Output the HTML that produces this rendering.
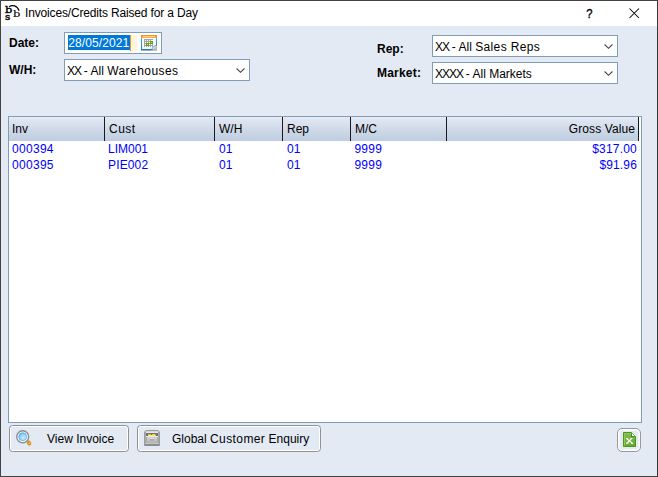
<!DOCTYPE html>
<html>
<head>
<meta charset="utf-8">
<title>Invoices/Credits Raised for a Day</title>
<style>
html,body{margin:0;padding:0;}
body{width:658px;height:477px;overflow:hidden;background:#E3EAF4;font-family:"Liberation Sans",Arial,sans-serif;font-size:12px;color:#000;position:relative;}
.abs{position:absolute;}
#win{position:absolute;left:0;top:0;width:656px;height:475px;border:1px solid #444;border-right-color:#383838;background:#E3EAF4;}
#title{position:absolute;left:1px;top:1px;width:656px;height:25px;background:#fff;}
#title .txt{position:absolute;left:24px;top:5px;font-size:12px;line-height:15px;white-space:nowrap;color:#000;letter-spacing:-0.16px;}
.lbl{position:absolute;font-weight:bold;font-size:12px;line-height:14px;white-space:nowrap;}
.field{position:absolute;box-sizing:border-box;border:1px solid #7F9DB9;background:#fff;height:22px;}
.field .t{position:absolute;left:2px;top:4px;line-height:14px;font-size:12px;white-space:nowrap;}
.chev{position:absolute;right:4px;top:8.4px;width:9px;height:5px;overflow:visible;}
#grid{position:absolute;left:8px;top:116px;width:634px;height:307px;box-sizing:border-box;border:1px solid #7F9DB9;background:#fff;}
#hdr{position:absolute;left:0;top:0;width:630px;height:24px;background:linear-gradient(#EAEFF8 0px,#E2E8F2 1.5px,#D0DAE9 12px,#BECDE0 24px);}
.hc{position:absolute;top:0;height:24px;box-sizing:border-box;border-right:1px solid #181a1e;}
.hc span{position:absolute;top:5px;line-height:14px;white-space:nowrap;}
.row{position:absolute;left:0;width:632px;height:16px;color:#0000FF;}
.row span{position:absolute;top:1px;line-height:14px;white-space:nowrap;}
.btn{position:absolute;box-sizing:border-box;border:1px solid #929292;border-radius:3.5px;background:#E3EAF4;box-shadow:inset 0 0 0 1px #fff;}
.btn .t{position:absolute;top:6px;line-height:14px;white-space:nowrap;}
</style>
</head>
<body>
<div id="win"></div>
<div id="title">
  <svg class="abs" style="left:3px;top:3px" width="18" height="18" viewBox="0 0 18 18">
    <text transform="translate(1.1,9) scale(1.12,0.96)" font-family="DejaVu Serif,Liberation Serif,serif" font-size="10.2" fill="#000" stroke="#000" stroke-width="0.4">b</text>
    <text transform="translate(1.1,15.7) scale(1.1,1)" font-family="DejaVu Serif,Liberation Serif,serif" font-size="9.4" fill="#000" stroke="#000" stroke-width="0.4">s</text>
    <text transform="translate(9,12.9) scale(1.12,0.98)" font-family="DejaVu Serif,Liberation Serif,serif" font-size="10.2" fill="#000" stroke="#000" stroke-width="0.12">b</text>
    <path d="M5 2.8 C8.3 0.5 13.2 1.4 15.1 6.8" fill="none" stroke="#000" stroke-width="1.2"/>
  </svg>
  <div class="txt">Invoices/Credits Raised for a Day</div>
  <svg class="abs" style="left:582px;top:4px" width="14" height="18" viewBox="0 0 14 18"><text transform="translate(3.3,13.0) scale(0.9,1.06)" font-family="Liberation Sans,Arial,sans-serif" font-size="12.5" fill="#000" stroke="#000" stroke-width="0.35">?</text></svg>
  <svg class="abs" style="left:627px;top:6px" width="12" height="12" viewBox="0 0 12 12"><path d="M1.5 1.5 L11 11 M11 1.5 L1.5 11" stroke="#000" stroke-width="1.05" fill="none"/></svg>
</div>

<div class="lbl" style="left:9px;top:36px;">Date:</div>
<div class="lbl" style="left:9px;top:63px;">W/H:</div>
<div class="lbl" style="left:377px;top:42px;">Rep:</div>
<div class="lbl" style="left:377px;top:66px;letter-spacing:0.2px">Market:</div>

<div class="field" style="left:64px;top:32px;width:98px;">
  <div class="abs" style="left:2px;top:2px;width:70px;height:16px;background:#FFF4DC;"></div>
  <div class="abs" style="left:3px;top:2px;width:62px;height:15px;background:#0078D7;"></div>
  <div class="abs" style="left:65px;top:2px;width:1px;height:16px;background:#F7941D;"></div>
  <div class="t" style="left:3.3px;top:3px;color:#fff;letter-spacing:0.08px;">28/05/2021</div>
  <svg class="abs" style="left:76px;top:2px" width="16" height="16" viewBox="0 0 16 16" shape-rendering="crispEdges">
    <defs><linearGradient id="calb" x1="0" y1="0" x2="0" y2="1"><stop offset="0" stop-color="#5AA9E6"/><stop offset="1" stop-color="#1B77B8"/></linearGradient></defs>
    <rect x="0" y="15" width="16" height="1" fill="#A9A9A9"/>
    <rect x="0" y="2" width="16" height="13" fill="url(#calb)"/>
    <rect x="1" y="3" width="14" height="11" fill="#F1FAFF"/>
    <rect x="0" y="0" width="16" height="3" fill="#F7931E"/>
    <rect x="2" y="1" width="12" height="1" fill="#FFD08A"/>
    <rect x="1" y="2" width="14" height="1" fill="#FBB04D"/>
    <rect x="3" y="4" width="10" height="8" fill="#A4A4A4"/>
    <g fill="#F4F4FB"><rect x="4" y="5" width="1" height="1"/><rect x="6" y="5" width="1" height="1"/><rect x="8" y="5" width="1" height="1"/><rect x="10" y="5" width="2" height="1"/>
    <rect x="4" y="7" width="1" height="1"/><rect x="6" y="7" width="1" height="1"/><rect x="8" y="7" width="1" height="1"/><rect x="12" y="7" width="1" height="1"/>
    <rect x="4" y="9" width="1" height="1"/><rect x="8" y="9" width="1" height="1"/><rect x="10" y="9" width="1" height="1"/><rect x="12" y="9" width="1" height="1"/>
    <rect x="4" y="11" width="1" height="1"/><rect x="6" y="11" width="1" height="1"/><rect x="8" y="11" width="1" height="1"/><rect x="10" y="11" width="1" height="1"/><rect x="12" y="4" width="1" height="8"/></g>
    <rect x="5" y="8" width="3" height="3" fill="#5FA60F"/><rect x="6" y="9" width="1" height="1" fill="#A5DB3C"/>
    <rect x="9" y="6" width="3" height="3" fill="#5FA60F"/><rect x="10" y="7" width="1" height="1" fill="#A5DB3C"/>
    <path d="M10 16 L16 10 L16 16 Z" fill="#B9BBBE" shape-rendering="auto"/>
    <path d="M11 14 L15 10 L15 11 Q13 11.5 12.5 14 Z" fill="#E8F3FB" shape-rendering="auto"/>
    <path d="M10.5 14.5 Q12 11 15.5 10" fill="none" stroke="#5C9BCB" stroke-width="0.9" shape-rendering="auto"/>
  </svg>
</div>

<div class="field" style="left:64px;top:59px;width:186px;"><div class="t"><span style="letter-spacing:-1px;margin-right:-0.5px">XX</span> - All <span style="letter-spacing:0.44px">Warehouses</span></div>
  <svg class="chev" viewBox="0 0 9 5"><path d="M0.6 0.5 L4.5 4.3 L8.4 0.5" fill="none" stroke="#444" stroke-width="1.1"/></svg></div>
<div class="field" style="left:432px;top:35px;width:186px;"><div class="t"><span style="letter-spacing:-1px;margin-right:-0.5px">XX</span> - All <span style="letter-spacing:0.36px">Sales Reps</span></div>
  <svg class="chev" viewBox="0 0 9 5"><path d="M0.6 0.5 L4.5 4.3 L8.4 0.5" fill="none" stroke="#444" stroke-width="1.1"/></svg></div>
<div class="field" style="left:432px;top:62px;width:186px;"><div class="t"><span style="letter-spacing:-1px;margin-right:-0.5px">XXXX</span> - All Markets</div>
  <svg class="chev" viewBox="0 0 9 5"><path d="M0.6 0.5 L4.5 4.3 L8.4 0.5" fill="none" stroke="#444" stroke-width="1.1"/></svg></div>

<div id="grid">
  <div id="hdr"></div>
  <div class="hc" style="left:0;width:96px;"><span style="left:3px">Inv</span></div>
  <div class="hc" style="left:96px;width:110px;"><span style="left:4px;letter-spacing:0.5px">Cust</span></div>
  <div class="hc" style="left:206px;width:68px;"><span style="left:4px">W/H</span></div>
  <div class="hc" style="left:274px;width:68px;"><span style="left:4px">Rep</span></div>
  <div class="hc" style="left:342px;width:96px;"><span style="left:4px">M/C</span></div>
  <div class="hc" style="left:438px;width:192px;"><span style="right:3px;letter-spacing:0.1px">Gross Value</span></div>
  <div class="row" style="top:24px;"><span style="left:3px;letter-spacing:0.3px">000394</span><span style="left:99px">LIM001</span><span style="left:210px">01</span><span style="left:278px">01</span><span style="left:345.4px;letter-spacing:0.25px">9999</span><span style="right:4px;letter-spacing:0.2px">$317.00</span></div>
  <div class="row" style="top:40px;"><span style="left:3px;letter-spacing:0.3px">000395</span><span style="left:99px;letter-spacing:0.15px">PIE002</span><span style="left:210px">01</span><span style="left:278px">01</span><span style="left:345.4px;letter-spacing:0.25px">9999</span><span style="right:4px;letter-spacing:0.15px">$91.96</span></div>
</div>

<div class="btn" style="left:9px;top:425px;width:120px;height:27px;">
  <svg class="abs" style="left:6px;top:4px" width="16" height="16" viewBox="0 0 16 16">
    <defs><radialGradient id="lens" cx="0.6" cy="0.65" r="0.7"><stop offset="0" stop-color="#C4ECFB"/><stop offset="0.6" stop-color="#9AD5F7"/><stop offset="1" stop-color="#4CA6EE"/></radialGradient></defs>
    <path d="M10.2 11.6 L12.2 9.6 L15 12 Q15.8 13.8 14.7 14.9 Q13.4 15.9 11.8 14.9 Z" fill="#D8931C"/>
    <path d="M12.6 12.4 L13.9 12.3 L14.2 13.6 L13 14.2 Z" fill="#FFC84A"/>
    <path d="M10.2 11 L11.6 9.6 L12.8 10.6 L11.2 12.2 Z" fill="#B8BEC6"/>
    <circle cx="6.7" cy="6.7" r="6" fill="#fff" stroke="#8C8C8C" stroke-width="1.4"/>
    <circle cx="6.7" cy="6.7" r="4.0" fill="url(#lens)" stroke="#4FA7EC" stroke-width="0.7"/>
  </svg>
  <div class="t" style="left:37px;">View Invoice</div>
</div>
<div class="btn" style="left:137px;top:425px;width:184px;height:27px;">
  <svg class="abs" style="left:6px;top:4px" width="16" height="16" viewBox="0 0 16 16">
    <defs><linearGradient id="cabg" x1="0" y1="0" x2="0" y2="1"><stop offset="0" stop-color="#D2D2D2"/><stop offset="1" stop-color="#B2B2B2"/></linearGradient></defs>
    <path d="M2 0 H14 L16 2 V15 Q16 16 15 16 H1 Q0 16 0 15 V2 Z" fill="#9B9B9B"/>
    <path d="M2.2 1 H13.8 L15 2.2 V3 H1 V2.2 Z" fill="#DADADA"/>
    <rect x="1" y="2" width="14" height="12" fill="#ABABAB"/>
    <rect x="2" y="2" width="12" height="1" fill="#E6E6E6"/>
    <rect x="2" y="3" width="12" height="3.2" fill="#6A7182"/>
    <path d="M4 6 V4.2 H6.6 L7.2 5 H7.8 L8.4 4 H11 L11.8 5 V6 Z" fill="#F6D93C"/>
    <path d="M4.4 6 V5 H7 L7.4 5.4 H11.4 V6 Z" fill="#FFEB6E"/>
    <rect x="2" y="6.1" width="12" height="0.9" fill="#F2F2F2"/>
    <rect x="3" y="7" width="10" height="6" fill="url(#cabg)"/>
    <rect x="6" y="8.2" width="4" height="2.6" rx="0.6" fill="#A9A9A9"/>
    <rect x="6" y="8" width="4" height="0.9" rx="0.4" fill="#E4E4E4"/>
    <rect x="1" y="13" width="14" height="1" fill="#C6C6C6"/>
    <rect x="0.5" y="14" width="15" height="2" rx="0.8" fill="#8C8C8C"/>
  </svg>
  <div class="t" style="left:34px;">Global <span style="letter-spacing:0.4px">Customer</span> Enquiry</div>
</div>
<div class="btn" style="left:617px;top:428px;width:24px;height:24px;border-radius:5px;border-color:#989898;box-shadow:inset 0 0 0 1px #fff, inset 0 0 0 2px rgba(255,255,255,0.55);">
  <svg class="abs" style="left:5px;top:3px" width="13" height="15" viewBox="0 0 13 15">
    <defs><linearGradient id="xlg" x1="0" y1="0" x2="0" y2="1"><stop offset="0" stop-color="#84BE4E"/><stop offset="1" stop-color="#62AA2C"/></linearGradient></defs>
    <path d="M0.5 0.5 H8.5 L12.5 4.5 V14.5 H0.5 Z" fill="url(#xlg)" stroke="#4C961F"/>
    <path d="M1.5 13.5 V1.5 H8" fill="none" stroke="#93CB62" stroke-width="0.9"/>
    <path d="M8 1 V5 H12 Z" fill="#3F8A18"/>
    <path d="M9 1.2 L11.8 4 H9 Z" fill="#fff"/>
    <path d="M3.6 6.5 L9.4 11.3 M8.6 6.5 L3.8 11.3" stroke="#fff" stroke-width="1.15" fill="none"/>
    <path d="M3 11.2 H5.4 M8 11.4 H10.2" stroke="#fff" stroke-width="1" fill="none"/>
    <path d="M3 6.5 H5 M7.4 6.5 H9.4" stroke="#fff" stroke-width="0.9" fill="none"/>
  </svg>
</div>
</body>
</html>
